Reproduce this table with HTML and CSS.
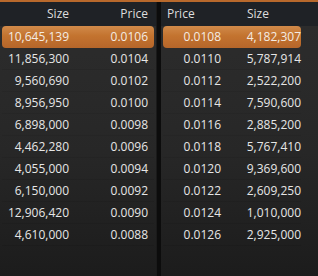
FILE: index.html
```html
<!DOCTYPE html>
<html>
<head>
<meta charset="utf-8">
<link rel="stylesheet" href="styles.css">
</head>
<body>
<div class="strip"></div>
<div class="book">
  <div class="panel bids">
    <div class="head row">
      <div class="c">Size</div>
      <div class="c">Price</div>
    </div>
    <div class="row sel"><div class="c">10,645,139</div><div class="c">0.0106</div></div>
    <div class="row"><div class="c">11,856,300</div><div class="c">0.0104</div></div>
    <div class="row"><div class="c">9,560,690</div><div class="c">0.0102</div></div>
    <div class="row"><div class="c">8,956,950</div><div class="c">0.0100</div></div>
    <div class="row"><div class="c">6,898,000</div><div class="c">0.0098</div></div>
    <div class="row"><div class="c">4,462,280</div><div class="c">0.0096</div></div>
    <div class="row"><div class="c">4,055,000</div><div class="c">0.0094</div></div>
    <div class="row"><div class="c">6,150,000</div><div class="c">0.0092</div></div>
    <div class="row"><div class="c">12,906,420</div><div class="c">0.0090</div></div>
    <div class="row"><div class="c">4,610,000</div><div class="c">0.0088</div></div>
  </div>
  <div class="divider"></div>
  <div class="panel asks">
    <div class="head row">
      <div class="c">Price</div>
      <div class="c">Size</div>
    </div>
    <div class="row sel"><div class="c">0.0108</div><div class="c">4,182,307</div></div>
    <div class="row"><div class="c">0.0110</div><div class="c">5,787,914</div></div>
    <div class="row"><div class="c">0.0112</div><div class="c">2,522,200</div></div>
    <div class="row"><div class="c">0.0114</div><div class="c">7,590,600</div></div>
    <div class="row"><div class="c">0.0116</div><div class="c">2,885,200</div></div>
    <div class="row"><div class="c">0.0118</div><div class="c">5,767,410</div></div>
    <div class="row"><div class="c">0.0120</div><div class="c">9,369,600</div></div>
    <div class="row"><div class="c">0.0122</div><div class="c">2,609,250</div></div>
    <div class="row"><div class="c">0.0124</div><div class="c">1,010,000</div></div>
    <div class="row"><div class="c">0.0126</div><div class="c">2,925,000</div></div>
  </div>
</div>
</body>
</html>
```

FILE: styles.css
```css
html, body {
  margin: 0;
  padding: 0;
  background: #1c1c1c;
  width: 318px;
  height: 276px;
  overflow: hidden;
  font-family: "Open Sans", "Noto Sans", sans-serif;
  font-size: 12px;
  color: #e6e6e6;
}
.strip {
  height: 2px;
  background: #b8692c;
}
.book {
  display: grid;
  grid-template-columns: 156px 5px 157px;
  height: 274px;
}
.panel {
  background: linear-gradient(180deg, #2d2d2d 0%, #272727 55%, #1c1c1c 100%);
  display: flex;
  flex-direction: column;
}
.divider {
  background: #0c0c0c;
  border-left: 1px solid #1a1a1a;
}
.row {
  display: grid;
  height: 22px;
  align-items: center;
  margin-left: 2px;
  border-bottom: 1px solid rgba(0,0,0,0.07);
  box-sizing: border-box;
}
.head {
  height: 24px;
  margin-left: 0;
  padding-left: 2px;
  background: #1f2226;
  border-bottom: none;
  color: #dedede;
}
.c {
  line-height: 22px;
  white-space: nowrap;
}
.bids .row {
  width: 152px;
  grid-template-columns: 73px 79px;
}
.bids .head {
  width: 156px;
  grid-template-columns: 73px 79px 4px;
}
.bids .c {
  text-align: right;
  padding-right: 6px;
}
.asks .row {
  width: 138px;
  grid-template-columns: 62px 76px;
}
.asks .head {
  width: 157px;
  grid-template-columns: 62px 95px;
}
.asks .c:first-child {
  text-align: right;
  padding-right: 4px;
}
.asks .c:last-child {
  text-align: right;
  padding-right: 0;
}
.asks .head .c:first-child {
  text-align: left;
  padding-left: 4px;
}
.asks .head .c:last-child {
  text-align: left;
  padding-left: 22px;
}
.row.sel {
  background: linear-gradient(180deg, #d08a4a 0%, #c3732f 45%, #b6662a 100%);
  border-radius: 4px;
  border-bottom: none;
  color: #f4ece4;
}
```
